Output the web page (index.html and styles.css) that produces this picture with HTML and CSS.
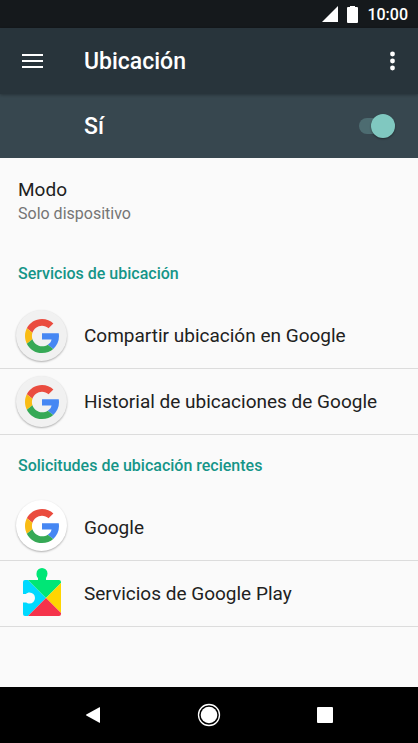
FILE: index.html
```html
<!DOCTYPE html>
<html lang="es">
<head>
<meta charset="utf-8">
<meta name="viewport" content="width=device-width, initial-scale=1">
<title>Ubicación</title>
<link rel="stylesheet" href="styles.css">
</head>
<body>
<svg class="defs" aria-hidden="true">
  <symbol id="g-logo" viewBox="0 0 48 48">
    <path fill="#ea4c3f" d="M24 9.5c3.54 0 6.71 1.22 9.21 3.6l6.85-6.85C35.9 2.38 30.47 0 24 0 14.62 0 6.51 5.38 2.56 13.22l7.98 6.19C12.43 13.72 17.74 9.5 24 9.5z"/>
    <path fill="#4687f3" d="M48 24.5c0-1.57-.15-3.09-.38-4.5H24v9.02h13.5c-.58 2.96-2.26 5.48-5.34 7.18l7.73 6c5.1-4.18 8.11-10.36 8.11-17.7z"/>
    <path fill="#f9bc15" d="M10.53 28.59c-.48-1.45-.76-2.99-.76-4.59s.27-3.14.76-4.59l-7.98-6.19C.92 16.46 0 20.12 0 24c0 3.88.92 7.54 2.56 10.78l7.97-6.19z"/>
    <path fill="#36a956" d="M24 48c6.48 0 11.93-2.13 15.89-5.81l-7.73-6c-2.15 1.45-4.92 2.3-8.16 2.3-6.26 0-11.57-4.22-13.47-9.91l-7.98 6.19C6.51 42.62 14.62 48 24 48z"/>
  </symbol>
</svg>
<div class="screen">
  <div class="status">
    <svg width="16" height="16" viewBox="0 0 16 16" aria-hidden="true"><path fill="#fff" d="M16 0v16H0z"/></svg>
    <svg width="11" height="17" viewBox="0 0 11 17" aria-hidden="true"><path fill="#fff" d="M3 0h5v1h2q1 0 1 1v14q0 1-1 1H1q-1 0-1-1V2q0-1 1-1h2z"/></svg>
    <span>10:00</span>
  </div>
  <header class="toolbar">
    <button class="icon-button" type="button" aria-label="Menú">
      <svg width="21" height="16" viewBox="0 0 21 16"><path fill="#fff" d="M0 1h21v2H0zM0 7h21v2H0zM0 13h21v2H0z"/></svg>
    </button>
    <h1>Ubicación</h1>
    <button class="icon-button" type="button" aria-label="Más opciones">
      <svg width="5" height="20" viewBox="0 0 5 20"><g fill="#fff"><circle cx="2.500" cy="3" r="2.400"/><circle cx="2.500" cy="10" r="2.400"/><circle cx="2.500" cy="17" r="2.400"/></g></svg>
    </button>
  </header>
  <div class="switch-bar">
    <label for="location">Sí</label>
    <input class="switch" id="location" type="checkbox" role="switch" checked>
  </div>
  <main>
    <a class="mode" href="#modo">
      <span class="item-title">Modo</span>
      <span class="summary">Solo dispositivo</span>
    </a>
    <h2>Servicios de ubicación</h2>
    <ul>
      <li><a class="row" href="#compartir"><span class="badge"><svg width="34" height="34"><use href="#g-logo"/></svg></span>Compartir ubicación en Google</a></li>
      <li><a class="row" href="#historial"><span class="badge"><svg width="34" height="34"><use href="#g-logo"/></svg></span>Historial de ubicaciones de Google</a></li>
    </ul>
    <h2>Solicitudes de ubicación recientes</h2>
    <ul class="recent">
      <li><a class="row" href="#google"><span class="badge white"><svg width="34" height="34"><use href="#g-logo"/></svg></span>Google</a></li>
      <li><a class="row" href="#play"><span class="piece">
        <svg width="38" height="48" viewBox="0 0 38 48" aria-hidden="true">
          <clipPath id="puzzle"><path d="M2 12H15V10C13.500 8.500 13.500 7 13.500 5.500A5.500 5.500 0 0 1 24.500 5.500C24.500 7 24 8.500 23 10V12H36Q38 12 38 14V46Q38 48 36 48H2Q0 48 0 46V34.500H3C4 35 5 35.500 6.500 35.500A5.500 5.500 0 0 0 6.500 24.500C5 24.500 4 25 3 26H0V14Q0 12 2 12Z"/></clipPath>
          <g clip-path="url(#puzzle)">
            <path fill="#00d9ff" d="M0 7L23 30L5 48H0z"/>
            <path fill="#00e676" d="M0 0H38V15L23 30L5 12L0 7z"/>
            <path fill="#ffd500" d="M38 15L23 30L38 45z"/>
            <path fill="#f5334b" d="M23 30L38 45V48H5z"/>
          </g>
        </svg></span>Servicios de Google Play</a></li>
    </ul>
  </main>
  <nav class="system-nav">
    <button type="button" aria-label="Atrás"><svg width="16" height="16" viewBox="0 0 16 16"><path fill="#fff" d="M15 .6v14.800q0 .6-.6.3L1.300 8.500Q.500 8 1.300 7.500L14.400.3Q15 0 15 .6z"/></svg></button>
    <button type="button" aria-label="Inicio"><svg width="24" height="24" viewBox="0 0 24 24"><circle cx="12" cy="12" r="10.500" fill="none" stroke="#fff" stroke-width="1.300"/><circle cx="12" cy="12" r="8.300" fill="#fff"/></svg></button>
    <button type="button" aria-label="Recientes"><svg width="16" height="16" viewBox="0 0 16 16"><rect width="16" height="16" rx="1" fill="#fff"/></svg></button>
  </nav>
</div>
</body>
</html>
```
FILE: styles.css
```css
* { box-sizing: border-box; }
body {
  margin: 0;
  font-family: Roboto, "Liberation Sans", sans-serif;
  color: #212121;
  background: #fafafa;
}
.defs { position: absolute; width: 0; height: 0; }
svg { display: block; }
button { border: 0; padding: 0; background: none; display: grid; place-items: center; }
a { color: inherit; text-decoration: none; }
ul { list-style: none; margin: 0; padding: 0; }
.screen { min-height: 100vh; display: flex; flex-direction: column; }
.status {
  height: 28px;
  padding: 0 10px;
  display: flex;
  align-items: center;
  justify-content: flex-end;
  gap: 9px;
  background: #15191c;
  color: #fff;
  font-size: 16px;
  font-weight: 500;
}
.toolbar {
  height: 66px;
  padding: 0 9px 0 16px;
  display: flex;
  align-items: center;
  background: #28343b;
  color: #fff;
  box-shadow: 0 1px 3px rgba(0, 0, 0, .3);
  z-index: 1;
}
.icon-button { width: 33px; height: 48px; }
h1 { flex: 1; margin: 0 0 0 35px; font-size: 23px; line-height: 30px; padding-top: 2px; font-weight: 500; }
.switch-bar {
  height: 64px;
  padding: 0 23px 0 84px;
  display: flex;
  align-items: center;
  justify-content: space-between;
  background: #37474f;
  color: #fff;
  font-size: 23px;
  font-weight: 500;
}
.switch {
  appearance: none;
  width: 36px;
  height: 16px;
  margin: 0;
  border-radius: 8px;
  background: #4d6c71;
  display: flex;
  align-items: center;
  justify-content: flex-end;
}
.switch::before {
  content: "";
  flex: none;
  width: 24px;
  height: 24px;
  border-radius: 50%;
  background: #80c8c0;
  box-shadow: 0 1px 2px rgba(0, 0, 0, .4);
}
main { flex: 1; }
.mode { display: flex; flex-direction: column; height: 85px; padding: 20px 18px; }
.item-title { font-size: 19px; line-height: 24px; }
.summary { font-size: 16px; line-height: 24px; color: #757575; }
h2 {
  margin: 0;
  padding: 19px 18px 17px;
  font-size: 16px;
  line-height: 24px;
  font-weight: 500;
  color: #159588;
}
.row {
  height: 66px;
  padding: 0 16px;
  display: flex;
  align-items: center;
  gap: 17px;
  border-bottom: 1px solid #dcdcdc;
  font-size: 19px;
}
.badge, .piece { width: 51px; height: 51px; flex: none; display: grid; place-items: center; }
.badge { border-radius: 50%; background: #f1f1f1; box-shadow: 0 1px 2px rgba(0, 0, 0, .3); }
.white { background: #fff; }
.recent .badge, .recent .piece { margin-bottom: 4px; }
.system-nav {
  height: 56px;
  display: flex;
  align-items: center;
  justify-content: center;
  gap: 60px;
  background: #000;
}
.system-nav button { width: 56px; height: 48px; }
```
